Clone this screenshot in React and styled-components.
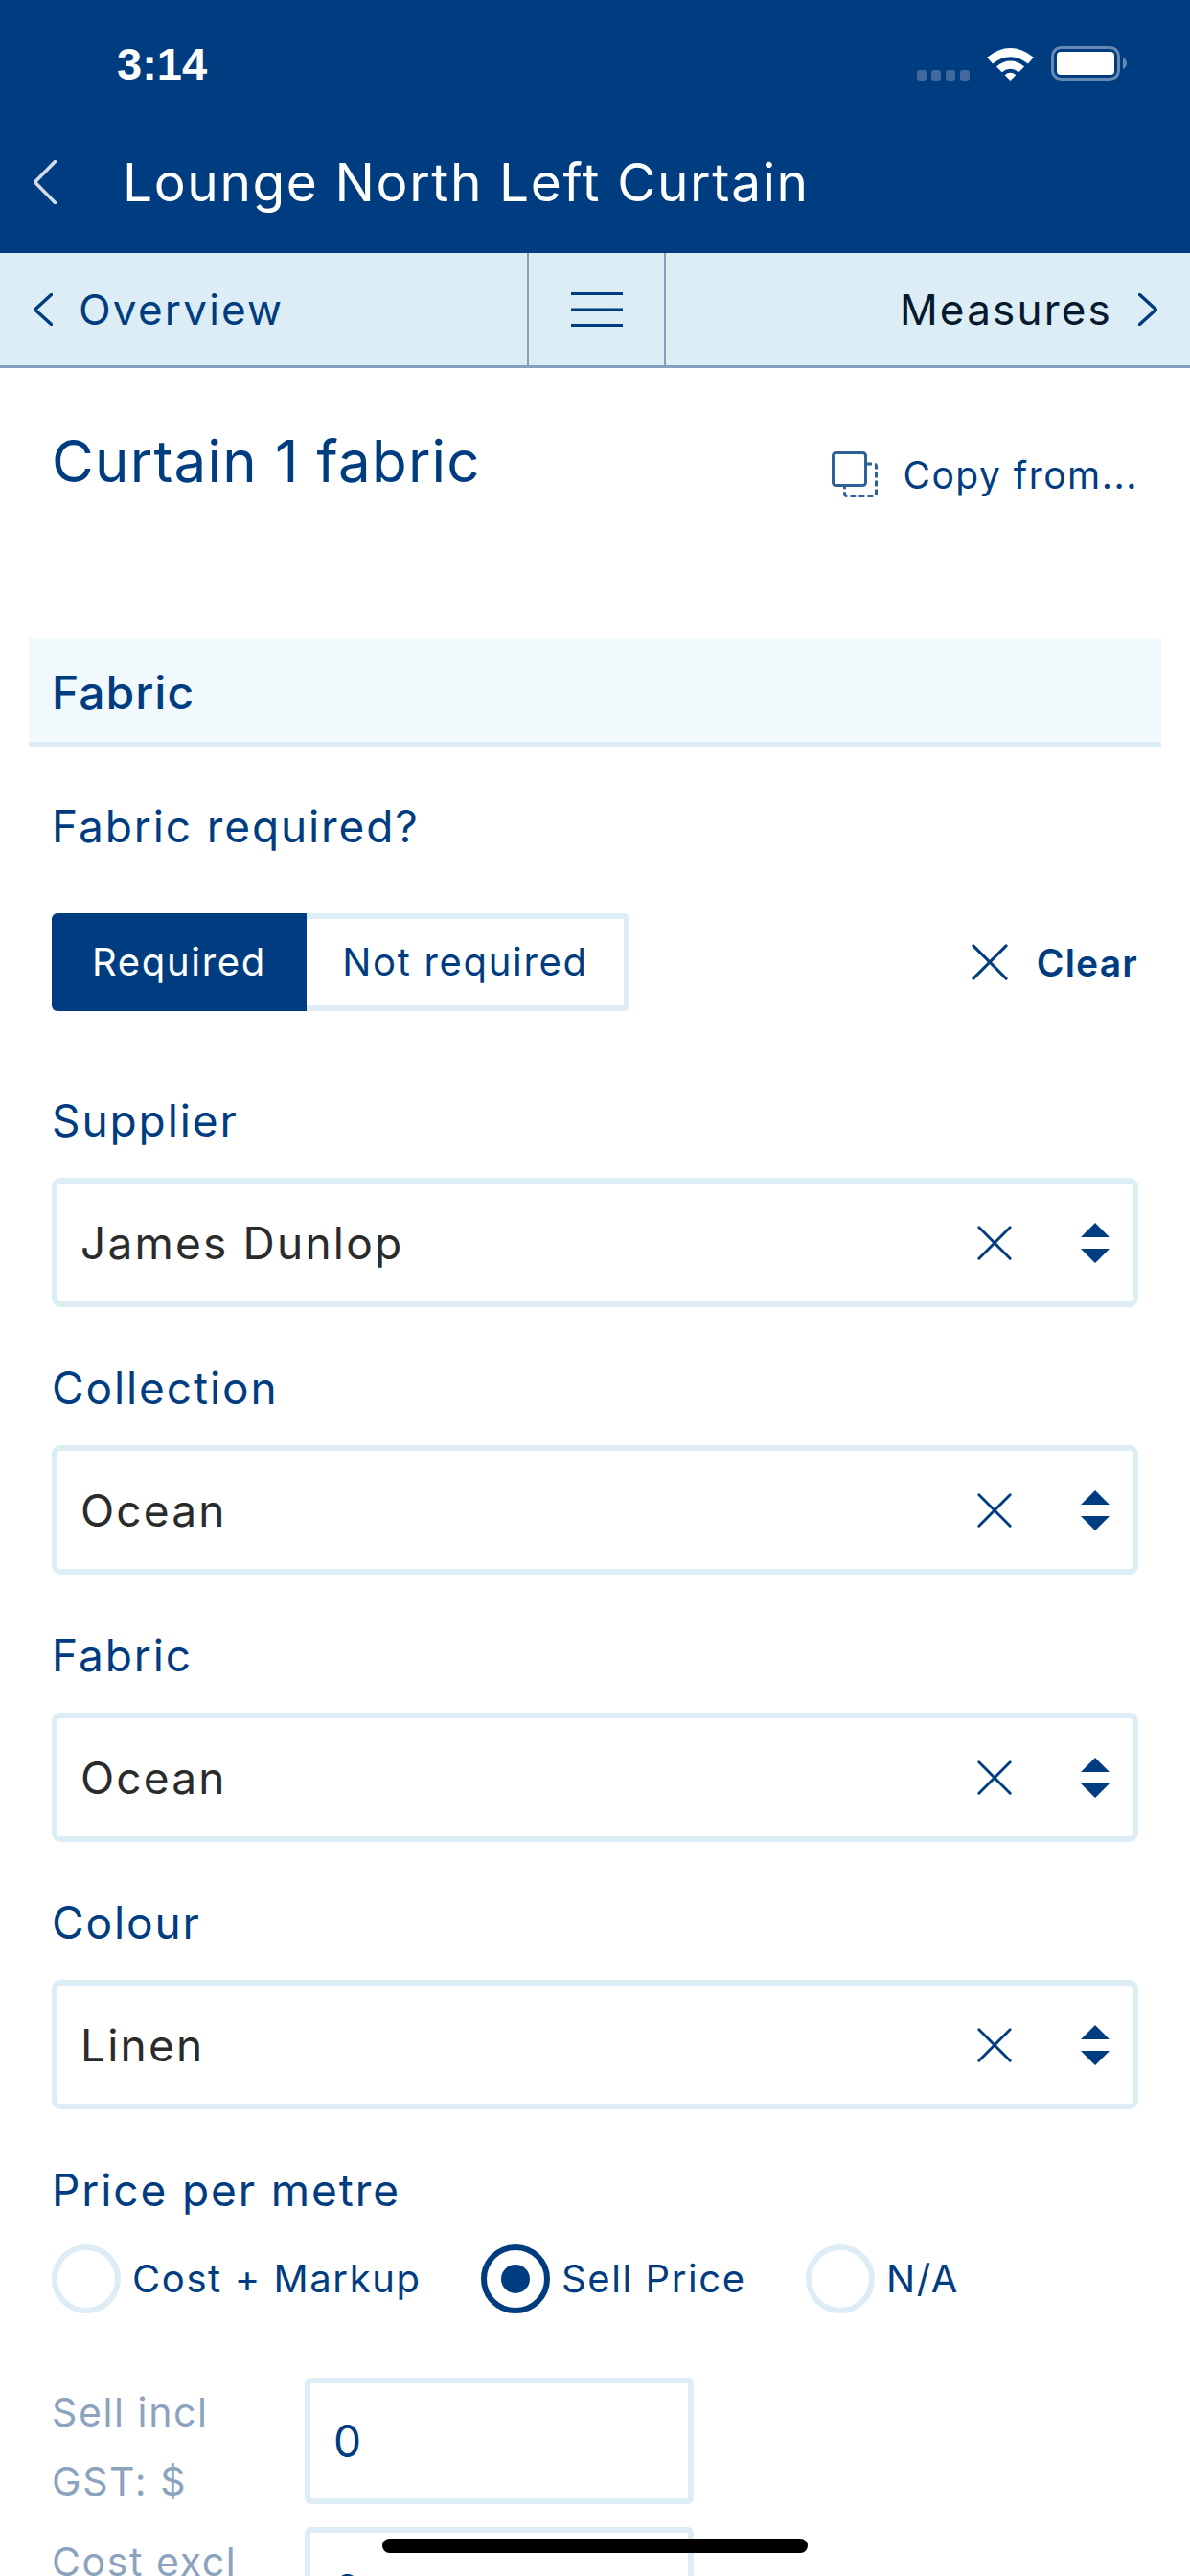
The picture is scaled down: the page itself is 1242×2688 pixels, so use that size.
import React from "react";
import styled, { createGlobalStyle } from "styled-components";

const NAVY = "#003d80";
const PALE = "#dcedf5";
const HEAD = `Inter, "Open Sans", "Liberation Sans", sans-serif`;
const BODY = `Inter, "Noto Sans", "Liberation Sans", sans-serif`;

const Global = createGlobalStyle`
  html, body { margin: 0; padding: 0; background: #fff; }
  * { box-sizing: border-box; }
`;
const Screen = styled.div`
  position: relative; width: 1242px; height: 2688px; overflow: hidden; background: #fff;
  font-family: ${BODY}; color: ${NAVY};
`;
const Header = styled.header`
  height: 264px; background: ${NAVY}; color: #fff; display: flex; flex-direction: column;
`;
const StatusBar = styled.div`
  height: 132px; display: flex; align-items: center; justify-content: space-between;
  padding: 0 65px 0 122px;
`;
const Time = styled.span`
  font: 700 47px/1 "Liberation Sans", Arial, sans-serif;
`;
const StatusIcons = styled.div`display: flex; align-items: flex-end; gap: 18px;`;
const TitleBar = styled.div`
  height: 132px; display: flex; align-items: center; gap: 69px; padding: 0 0 16px 35px;
`;
const Title = styled.h1`
  margin: 0; font: 400 55px/1 ${HEAD}; letter-spacing: 1.6px; color: #fff;
`;
const Nav = styled.nav`
  height: 120px; background: ${PALE}; border-bottom: 3px solid #84a0bd; display: grid;
  grid-template-columns: 550px 145px 1fr;
`;
const NavCell = styled.div`
  display: flex; align-items: center; gap: 27px; padding: 0 34px 0 35px;
  font: 400 44px/1 ${BODY}; letter-spacing: 2.2px;
  color: ${(p) => p.$dark ? "#061a2e" : NAVY};
  justify-content: ${(p) => p.$end ? "flex-end" : "flex-start"};
`;
const NavMiddle = styled.div`
  display: flex; align-items: center; justify-content: center;
  border-left: 2px solid #84a0bd; border-right: 2px solid #84a0bd;
`;
const Main = styled.main`padding: 0 30px;`;
const PageHead = styled.div`
  height: 282px; padding: 67px 24px 0 24px; display: flex; justify-content: space-between; align-items: flex-start;
`;
const PageTitle = styled.h2`margin: 0; font: 400 60px/1 ${HEAD}; letter-spacing: 1.2px;`;
const Copy = styled.div`
  display: flex; align-items: center; gap: 26px; padding-top: 20px;
  font: 400 39px/1 ${BODY}; letter-spacing: 1.5px;
`;
const Section = styled.div`
  height: 114px; background: #f1f9fc; border-bottom: 6px solid ${PALE}; padding: 6px 24px 0;
  display: flex; align-items: center; font: 500 48px/1 ${HEAD}; letter-spacing: 1px;
`;
const Form = styled.div`padding: 0 24px;`;
const Label = styled.label`
  display: block; font: 400 46px/42px ${BODY}; letter-spacing: 1.9px; height: 81px;
`;
const RequiredLabel = styled(Label)`margin: 61px 0 0; height: 112px;`;
const SegmentRow = styled.div`
  display: flex; align-items: center; justify-content: space-between; height: 102px; margin-bottom: 93px;
`;
const Segment = styled.div`
  display: flex; height: 102px; width: 603px; border: 6px solid ${PALE}; border-radius: 6px;
`;
const SegmentOption = styled.div`
  display: flex; align-items: center; justify-content: center; font: 400 40px/1 ${BODY}; letter-spacing: 1.7px;
  flex: 1;
`;
const SegmentActive = styled(SegmentOption)`
  flex: 0 0 266px; background: ${NAVY}; color: #fff; margin: -6px 0 -6px -6px; border-radius: 6px 0 0 6px;
  font-size: 40px;
`;
const Clear = styled.div`
  display: flex; align-items: center; gap: 30px; font: 600 39px/1 ${BODY}; letter-spacing: 1.2px;
`;
const Field = styled.div`margin-bottom: 63px;`;
const SelectBox = styled.div`
  height: 135px; border: 6px solid ${PALE}; border-radius: 9px; display: flex; align-items: center;
  padding: 0 24px; font: 400 46px/1 ${BODY}; letter-spacing: 2.2px; color: #2b2b2b;
`;
const SelectValue = styled.span`flex: 1;`;
const SelectIcons = styled.div`display: flex; align-items: center; gap: 72px;`;
const RadioRow = styled.div`display: flex; align-items: center; height: 71px; margin-top: -3px;`;
const RadioItem = styled.div`
  display: flex; align-items: center; gap: 12px; width: ${(p) => p.$w}px;
  font: 400 40px/1 ${BODY}; letter-spacing: 1.6px;
`;
const RadioDot = styled.span`
  width: 72px; height: 72px; border-radius: 50%; flex: none; display: flex; align-items: center; justify-content: center;
  border: 6px solid ${(p) => p.$on ? NAVY : PALE};
  &::after { content: ""; width: 30px; height: 30px; border-radius: 50%; background: ${(p) => p.$on ? NAVY : "transparent"}; }
`;
const AmountRow = styled.div`display: grid; grid-template-columns: 264px 406px; margin-top: ${(p) => p.$mt}px;`;
const AmountLabel = styled.div`
  font: 400 41px/72px ${BODY}; letter-spacing: 1.6px; color: #8ca3bf;
`;
const AmountInput = styled.div`
  height: 132px; border: 6px solid ${PALE}; border-radius: 6px; display: flex; align-items: center;
  padding-left: 24px; font: 400 46px/1 ${BODY}; color: ${NAVY};
`;
const HomeBar = styled.div`
  position: absolute; left: 399px; top: 2649px; width: 444px; height: 15px; border-radius: 8px; background: #000;
`;

const Chevron = ({ dir = "left", w = 20, h = 34, color = NAVY }) => (
  <svg width={w} height={h} viewBox={`0 0 ${w} ${h}`} fill="none" style={{ flex: "none" }}>
    <path
      d={dir === "left"
        ? `M${w - 1.5} 1.5 L1.5 ${h / 2} L${w - 1.5} ${h - 1.5}`
        : `M1.5 1.5 L${w - 1.5} ${h / 2} L1.5 ${h - 1.5}`}
      stroke={color} strokeWidth="3.5" strokeLinecap="round" strokeLinejoin="round"
    />
  </svg>
);
const Cross = ({ size = 36 }) => (
  <svg width={size} height={size} viewBox="0 0 40 40" fill="none" style={{ flex: "none" }}>
    <path d="M2 2 L38 38 M38 2 L2 38" stroke={NAVY} strokeWidth="3.2" strokeLinecap="round" />
  </svg>
);
const Updown = () => (
  <svg width="30" height="42" viewBox="0 0 30 42" style={{ flex: "none" }}>
    <path d="M15 0 L30 15 H0 Z M0 27 H30 L15 42 Z" fill={NAVY} />
  </svg>
);
const Burger = () => (
  <svg width="54" height="36" viewBox="0 0 54 36" fill={NAVY}>
    <rect y="0" width="54" height="3" /><rect y="16.5" width="54" height="3" /><rect y="33" width="54" height="3" />
  </svg>
);
const CopyIcon = () => (
  <svg width="48" height="48" viewBox="0 0 48 48" fill="none" stroke="#2f6199" strokeWidth="3" style={{ flex: "none" }}>
    <rect x="1.5" y="1.5" width="34" height="34" rx="3" />
    <path d="M36 13 H44 Q46.5 13 46.5 15.5 V44 Q46.5 46.5 44 46.5 H16 Q13.5 46.5 13.5 44 V36" strokeDasharray="6 3" />
  </svg>
);
const Signal = () => (
  <svg width="55" height="11" viewBox="0 0 55 11" fill="#41699d">
    {[0, 15, 30, 45].map((x) => <rect key={x} x={x} width="10" height="11" rx="3" />)}
  </svg>
);
const Wifi = () => (
  <svg width="49" height="35" viewBox="0 0 50 36" fill="#fff">
    <path d="M0 11 Q25 -9 50 11 L44 18 Q25 3 6 18 Z" />
    <path d="M10 21 Q25 9 40 21 L34 27 Q25 20 16 27 Z" />
    <path d="M19 30 Q25 25 31 30 L25 36 Z" />
  </svg>
);
const Battery = () => (
  <svg width="80" height="36" viewBox="0 0 80 36">
    <rect x="1.5" y="1.5" width="69" height="33" rx="9" fill="none" stroke="#6489b3" strokeWidth="3" />
    <rect x="6" y="6" width="60" height="24" rx="4" fill="#fff" />
    <path d="M75 12 Q79 14 79 18 Q79 22 75 24 Z" fill="#6489b3" />
  </svg>
);

const fields = [
  ["Supplier", "James Dunlop"],
  ["Collection", "Ocean"],
  ["Fabric", "Ocean"],
  ["Colour", "Linen"],
];

export default function App() {
  return (
    <Screen>
      <Global />
      <Header>
        <StatusBar>
          <Time>3:14</Time>
          <StatusIcons><Signal /><Wifi /><Battery /></StatusIcons>
        </StatusBar>
        <TitleBar>
          <Chevron w={24} h={46} color="#d5dde8" />
          <Title>Lounge North Left Curtain</Title>
        </TitleBar>
      </Header>
      <Nav>
        <NavCell><Chevron />Overview</NavCell>
        <NavMiddle><Burger /></NavMiddle>
        <NavCell $end $dark>Measures<Chevron dir="right" /></NavCell>
      </Nav>
      <Main>
        <PageHead>
          <PageTitle>Curtain 1 fabric</PageTitle>
          <Copy><CopyIcon />Copy from...</Copy>
        </PageHead>
        <Section>Fabric</Section>
        <Form>
          <RequiredLabel>Fabric required?</RequiredLabel>
          <SegmentRow>
            <Segment>
              <SegmentActive>Required</SegmentActive>
              <SegmentOption>Not required</SegmentOption>
            </Segment>
            <Clear><Cross size={38} />Clear</Clear>
          </SegmentRow>
          {fields.map(([l, v]) => (
            <Field key={l}>
              <Label>{l}</Label>
              <SelectBox>
                <SelectValue>{v}</SelectValue>
                <SelectIcons><Cross /><Updown /></SelectIcons>
              </SelectBox>
            </Field>
          ))}
          <Label>Price per metre</Label>
          <RadioRow>
            <RadioItem $w={448}><RadioDot />Cost + Markup</RadioItem>
            <RadioItem $w={339}><RadioDot $on />Sell Price</RadioItem>
            <RadioItem $w={200}><RadioDot />N/A</RadioItem>
          </RadioRow>
          <AmountRow $mt={68}>
            <AmountLabel>Sell incl<br />GST: $</AmountLabel>
            <AmountInput>0</AmountInput>
          </AmountRow>
          <AmountRow $mt={12}>
            <AmountLabel>Cost excl<br />GST: $</AmountLabel>
            <AmountInput>0</AmountInput>
          </AmountRow>
        </Form>
      </Main>
      <HomeBar />
    </Screen>
  );
}
